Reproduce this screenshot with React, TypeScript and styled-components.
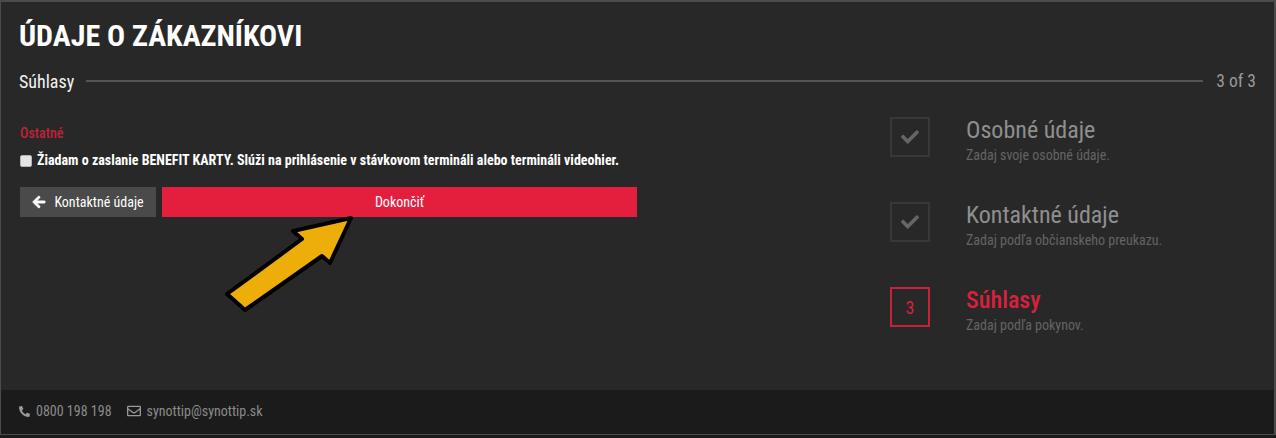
import React from "react";
import styled, { createGlobalStyle } from "styled-components";
import { FaCheck, FaArrowLeft, FaPhoneAlt, FaRegEnvelope } from "react-icons/fa";

const Global = createGlobalStyle`
  html, body { margin: 0; padding: 0; background: #1b1b1b; }
  body { font-family: "Roboto", "Liberation Sans", sans-serif; font-stretch: 75%; }
  * { box-sizing: border-box; }
`;
const Frame = styled.div`
  position: relative; width: 1276px; height: 435px;
  display: flex; flex-direction: column;
  border: 1px solid #4c4c4c; border-top-width: 2px; border-right-width: 2px;
  background: #282828;
`;
const Main = styled.main`
  flex: 1; padding: 0 18px 0 18px;
  display: flex; flex-direction: column;
`;
const Title = styled.h1`
  margin: 16px 0 0; font-size: 30px; line-height: 36px; font-weight: 700; color: #fff;
`;
const StepBar = styled.div`
  display: flex; align-items: center; height: 24px; margin-top: 15px;
`;
const StepName = styled.span`font-size: 18px; color: #f2f2f2;`;
const Rule = styled.span`flex: 1; height: 2px; background: #555; margin: 0 13px 0 12px;`;
const StepCount = styled.span`font-size: 17.5px; color: #999;`;
const Columns = styled.div`display: flex; justify-content: space-between; flex: 1;`;
const FormCol = styled.div`width: 618px; padding-top: 32px; padding-left: 1px;`;
const Section = styled.div`font-size: 14px; font-weight: 500; color: #c0213b; line-height: 16px;`;
const CheckRow = styled.label`
  display: flex; align-items: center; margin-top: 9px; height: 20px;
  font-size: 14px; font-weight: 700; color: #fff;
`;
const Check = styled.span`
  width: 12px; height: 12px; background: #e4e4e4; border: 1px solid #b5b5b5; border-radius: 2px; margin: 1px 5px 0 0;
`;
const Buttons = styled.div`display: flex; gap: 6px; margin-top: 17px;`;
const BackBtn = styled.button`
  width: 136px; height: 30px; border: 0; background: #4a4a4a; color: #fff;
  display: flex; align-items: center; justify-content: center; gap: 8px;
  font: inherit; font-size: 14px;
`;
const BackIcon = styled(FaArrowLeft)`stroke: #fff; stroke-width: 30px;`;
const FinishBtn = styled.button`
  flex: 1; height: 30px; border: 0; background: #e31f3d; color: #fff;
  font: inherit; font-size: 14px; font-weight: 400;
`;
const Steps = styled.div`
  width: 348px; padding-top: 24px; margin-right: 18px;
  display: flex; flex-direction: column; gap: 45px;
`;
const Step = styled.div`display: flex; gap: 36px; height: 40px;`;
const Box = styled.div<{ $active?: boolean }>`
  width: 40px; height: 40px; flex: none;
  display: flex; align-items: center; justify-content: center;
  border: 2px solid ${p => (p.$active ? "#c8213b" : "#383838")};
  color: ${p => (p.$active ? "#d8213d" : "#666")};
  font-size: 18px; font-weight: 400;
`;
const StepText = styled.div`display: flex; flex-direction: column; margin-top: -1px;`;
const StepTitle = styled.div<{ $active?: boolean }>`
  font-size: 24px; line-height: 28px; font-weight: ${p => (p.$active ? 500 : 400)};
  color: ${p => (p.$active ? "#d8213d" : "#8f8f8f")};
`;
const StepSub = styled.div`font-size: 14px; line-height: 16px; color: #646464; margin-top: 3px;`;
const Footer = styled.footer`
  height: 44px; background: #1b1b1b; display: flex; align-items: center;
  padding: 0 18px 2px; gap: 15px; font-size: 14px; color: #8c8c8c;
`;
const Contact = styled.span`display: flex; align-items: center; gap: 6px;`;
const Arrow = styled.svg`position: absolute; left: 0; top: 0; pointer-events: none;`;

export default function App() {
  return (
    <>
      <Global />
      <Frame>
        <Main>
          <Title>ÚDAJE O ZÁKAZNÍKOVI</Title>
          <StepBar>
            <StepName>Súhlasy</StepName>
            <Rule />
            <StepCount>3 of 3</StepCount>
          </StepBar>
          <Columns>
            <FormCol>
              <Section>Ostatné</Section>
              <CheckRow>
                <Check />
                Žiadam o zaslanie BENEFIT KARTY. Slúži na prihlásenie v stávkovom termináli alebo termináli videohier.
              </CheckRow>
              <Buttons>
                <BackBtn><BackIcon size={14} />Kontaktné údaje</BackBtn>
                <FinishBtn>Dokončiť</FinishBtn>
              </Buttons>
            </FormCol>
            <Steps>
              <Step>
                <Box><FaCheck size={18} /></Box>
                <StepText><StepTitle>Osobné údaje</StepTitle><StepSub>Zadaj svoje osobné údaje.</StepSub></StepText>
              </Step>
              <Step>
                <Box><FaCheck size={18} /></Box>
                <StepText><StepTitle>Kontaktné údaje</StepTitle><StepSub>Zadaj podľa občianskeho preukazu.</StepSub></StepText>
              </Step>
              <Step>
                <Box $active>3</Box>
                <StepText><StepTitle $active>Súhlasy</StepTitle><StepSub>Zadaj podľa pokynov.</StepSub></StepText>
              </Step>
            </Steps>
          </Columns>
        </Main>
        <Footer>
          <Contact><FaPhoneAlt size={11} color="#999" />0800 198 198</Contact>
          <Contact><FaRegEnvelope size={14} color="#999" />synottip@synottip.sk</Contact>
        </Footer>
        <Arrow width="1276" height="435" viewBox="1 2 1276 435">
          <path d="M351 218 L293 231 L302 239 L227 294 L245 310 L322 256 L330 263 Z" fill="#eeae09" stroke="#000" strokeWidth="4" strokeLinejoin="round" />
        </Arrow>
      </Frame>
    </>
  );
}
